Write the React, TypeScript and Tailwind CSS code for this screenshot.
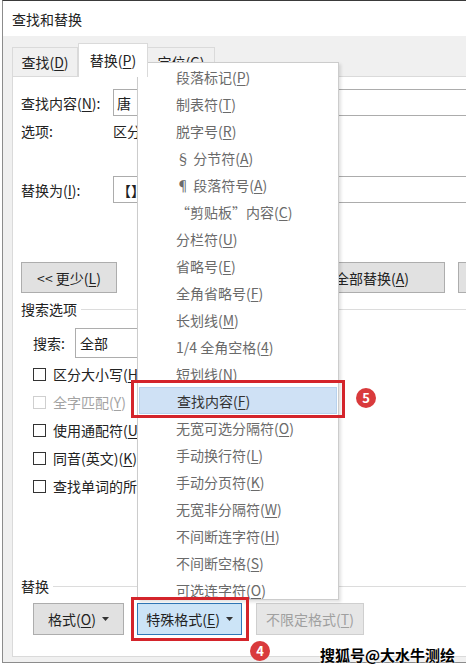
const menuItems: [string, string][] = [
  ["段落标记", "P"],
  ["制表符", "T"],
  ["脱字号", "R"],
  ["§ 分节符", "A"],
  ["¶ 段落符号", "A"],
  ["“剪贴板”内容", "C"],
  ["分栏符", "U"],
  ["省略号", "E"],
  ["全角省略号", "F"],
  ["长划线", "M"],
  ["1/4 全角空格", "4"],
  ["短划线", "N"],
  ["查找内容", "F"],
  ["无宽可选分隔符", "O"],
  ["手动换行符", "L"],
  ["手动分页符", "K"],
  ["无宽非分隔符", "W"],
  ["不间断连字符", "H"],
  ["不间断空格", "S"],
  ["可选连字符", "O"],
];

function Key({ t, k }: { t: string; k: string }) {
  return (
    <span className="whitespace-nowrap">
      {t}(<span className="underline underline-offset-2">{k}</span>)
    </span>
  );
}

function Caret() {
  return (
    <svg width="7" height="4" viewBox="0 0 7 4" className="ml-[6px]">
      <path d="M0 0h7L3.5 4z" fill="#333" />
    </svg>
  );
}

function Check({ label, k, disabled }: { label: string; k: string; disabled?: boolean }) {
  return (
    <div className="flex h-[28px] items-center">
      <div
        className={`h-[13px] w-[13px] shrink-0 border bg-white ${disabled ? "border-[#cfcfcf]" : "border-[#333]"}`}
      />
      <div className={`ml-[7px] whitespace-nowrap ${disabled ? "text-[#a3a3a3]" : ""}`}>
        <Key t={label} k={k} />
      </div>
    </div>
  );
}

function GroupLabel({ text }: { text: string }) {
  return (
    <div className="flex h-[18px] items-center pl-[8px]">
      <span className="whitespace-nowrap">{text}</span>
      <div className="ml-[4px] h-px flex-1 bg-[#dcdcdc]" />
    </div>
  );
}

export default function App() {
  return (
    <div className="relative h-[670px] w-[466px] overflow-hidden bg-white font-['Noto_Sans_CJK_SC',sans-serif] text-[14px] leading-[20px] text-[#222]">
      {/* dialog */}
      <div className="ml-[2px] w-[680px] border border-[#8c8c8c] border-t-[#3a3a3a]">
        <div className="flex h-[35px] items-center bg-white pl-[9px]">查找和替换</div>

        <div className="bg-[#f0f0f0] pb-[5px] pl-[9px]">
          {/* tabs */}
          <div className="flex h-[40px] items-end">
            <div className="flex h-[29px] w-[66px] items-center justify-center border border-b-0 border-[#dadada] bg-[#f0f0f0]">
              <Key t="查找" k="D" />
            </div>
            <div className="relative z-10 -mb-px flex h-[34px] w-[70px] items-center justify-center border border-b-0 border-[#dadada] bg-white pb-[2px]">
              <Key t="替换" k="P" />
            </div>
            <div className="flex h-[29px] w-[67px] items-center justify-center border border-b-0 border-l-0 border-[#dadada] bg-[#f0f0f0]">
              <Key t="定位" k="G" />
            </div>
          </div>

          {/* panel */}
          <div className="h-[581px] border border-[#dadada] bg-white">
            <div className="mt-[12px] flex h-[27px] items-center pl-[8px]">
              <div className="w-[92px] shrink-0 whitespace-nowrap">
                <Key t="查找内容" k="N" />:
              </div>
              <div className="flex h-[27px] w-[420px] shrink-0 items-center border border-[#acacac] pl-[3px]">唐</div>
            </div>
            <div className="mt-[5px] flex h-[20px] items-center pl-[8px]">
              <div className="w-[92px] shrink-0">选项:</div>
              <div className="whitespace-nowrap">区分全/半角</div>
            </div>
            <div className="mt-[35px] flex h-[27px] items-center pl-[8px]">
              <div className="w-[92px] shrink-0 whitespace-nowrap">
                <Key t="替换为" k="I" />:
              </div>
              <div className="flex h-[27px] w-[420px] shrink-0 items-center border border-[#acacac] pl-[3px]">【】</div>
            </div>

            <div className="mt-[59px] flex h-[31px] items-stretch pl-[8px]">
              <div className="flex w-[96px] shrink-0 items-center justify-center border border-[#adadad] bg-[#e1e1e1]">
                <span className="whitespace-nowrap">
                  &lt;&lt; 更少(<span className="underline underline-offset-2">L</span>)
                </span>
              </div>
              <div className="ml-[182px] flex w-[146px] shrink-0 items-center justify-center border border-[#adadad] bg-[#e1e1e1]">
                <Key t="全部替换" k="A" />
              </div>
              <div className="ml-[13px] flex w-[170px] shrink-0 items-center justify-center border border-[#adadad] bg-[#e1e1e1]">
                <Key t="查找下一处" k="F" />
              </div>
            </div>

            <div className="mt-[7px]">
              <GroupLabel text="搜索选项" />
            </div>

            <div className="mt-[10px] flex h-[30px] items-center pl-[20px]">
              <div className="w-[42px] shrink-0">搜索:</div>
              <div className="flex h-[30px] w-[160px] shrink-0 items-center border border-[#adadad] pl-[4px]">全部</div>
            </div>

            <div className="mt-[2px] pl-[20px]">
              <Check label="区分大小写" k="H" />
              <Check label="全字匹配" k="Y" disabled />
              <Check label="使用通配符" k="U" />
              <Check label="同音(英文)" k="K" />
              <Check label="查找单词的所有形式(英文)" k="W" />
            </div>

            <div className="mt-[77px]">
              <GroupLabel text="替换" />
            </div>

            <div className="mt-[8px] flex h-[32px] items-stretch pl-[20px]">
              <div className="flex w-[91px] shrink-0 items-center justify-center border border-[#adadad] bg-[#e1e1e1]">
                <Key t="格式" k="O" />
                <Caret />
              </div>
              <div className="ml-[13px] flex w-[105px] shrink-0 items-center justify-center border border-[#2f78b8] bg-[#cce4f7]">
                <Key t="特殊格式" k="E" />
                <Caret />
              </div>
              <div className="ml-[14px] flex w-[108px] shrink-0 items-center justify-center border border-[#cfcfcf] bg-[#e6e6e6] text-[#a0a0a0]">
                <Key t="不限定格式" k="T" />
              </div>
            </div>
          </div>
        </div>
      </div>

      {/* dropdown menu */}
      <div className="absolute left-[137px] top-[62px] h-[538px] w-[202px] border border-[#cccccc] bg-white shadow-[2px_2px_3px_rgba(0,0,0,0.12)]">
        {menuItems.map(([t, k], i) =>
          i === 12 ? (
            <div
              key={i}
              className="mx-px flex h-[27px] items-center border border-[#b8d2ee] bg-[#cfe1f5] pl-[37px] text-[#333]"
            >
              <Key t={t} k={k} />
            </div>
          ) : (
            <div key={i} className="flex h-[27px] items-center pl-[38px] text-[#6a6a6a]">
              <Key t={t} k={k} />
            </div>
          )
        )}
      </div>

      {/* annotations */}
      <div className="absolute left-[131px] top-[380px] h-[38px] w-[214px] border-[3px] border-[#d4242b]" />
      <div className="absolute left-[131px] top-[597px] h-[44px] w-[118px] border-[3px] border-[#d4242b]" />
      <div className="absolute left-[356px] top-[388px] flex h-[20px] w-[20px] items-center justify-center rounded-full bg-[#d93a3c] text-[13px] font-bold text-white">
        5
      </div>
      <div className="absolute left-[250px] top-[641px] flex h-[20px] w-[20px] items-center justify-center rounded-full bg-[#d93a3c] text-[13px] font-bold text-white">
        4
      </div>
      <div className="absolute left-[320px] top-[645px] text-[15px] font-bold leading-[20px] text-black [text-shadow:0_0_2px_#fff,0_0_2px_#fff]">
        搜狐号@大水牛测绘
      </div>
    </div>
  );
}
